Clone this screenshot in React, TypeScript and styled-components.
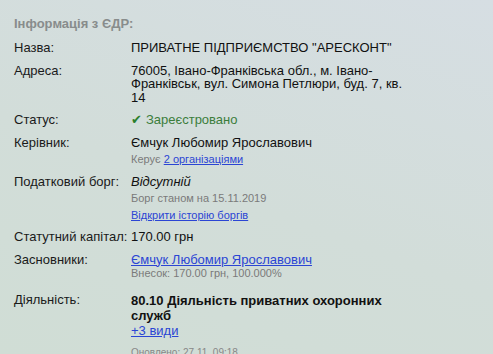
import styled, { createGlobalStyle } from 'styled-components';

const GlobalStyle = createGlobalStyle`
  html, body {
    margin: 0;
    padding: 0;
  }
  body {
    font-family: 'Liberation Sans', Arial, sans-serif;
    background: #d3dedb;
  }
`;

const Page = styled.div`
  width: 493px;
  height: 354px;
  overflow: hidden;
  background: linear-gradient(20deg, #d0ddd5 0%, #d2ddd9 45%, #d6dee3 100%);
  padding: 16px 0 0 14px;
  box-sizing: border-box;
  color: #111;
`;

const Heading = styled.div`
  font-size: 13px;
  font-weight: bold;
  line-height: 16px;
  color: #888c8c;
  margin-bottom: 4px;
`;

const Row = styled.div<{ $gapTop?: number }>`
  display: grid;
  grid-template-columns: 117px 273px;
  padding: 4.5px 0;
  margin-top: ${(p) => p.$gapTop ?? 0}px;
  font-size: 13px;
  line-height: 14px;
`;

const Label = styled.div`
  color: #1a1a1a;
`;

const Value = styled.div<{ $italic?: boolean; $lh?: number }>`
  font-style: ${(p) => (p.$italic ? 'italic' : 'normal')};
  line-height: ${(p) => p.$lh ?? 14}px;
`;

const Status = styled.span`
  color: #3b7d3b;
  &::before {
    content: '✔';
    color: #2a7f2a;
    margin-right: 4px;
    font-size: 13px;
  }
`;

const Sub = styled.div<{ $mt?: number; $lh?: number }>`
  font-size: 11px;
  line-height: ${(p) => p.$lh ?? 13}px;
  color: #7a7a7a;
  font-style: normal;
  font-weight: normal;
  margin-top: ${(p) => p.$mt ?? 3}px;
`;

const A = styled.a`
  color: #2b45d4;
  text-decoration: underline;
  cursor: pointer;
`;

const Updated = styled.div`
  margin: 5px 0 0 117px;
  font-size: 10px;
  line-height: 12px;
  color: #888;
`;

export default function App() {
  return (
    <>
      <GlobalStyle />
      <Page>
        <Heading>Інформація з ЄДР:</Heading>
        <Row>
          <Label>Назва:</Label>
          <Value>ПРИВАТНЕ ПІДПРИЄМСТВО "АРЕСКОНТ"</Value>
        </Row>
        <Row>
          <Label>Адреса:</Label>
          <Value $lh={13.5}>
            76005, Івано-Франківська обл., м. Івано-Франківськ, вул. Симона Петлюри, буд. 7, кв. 14
          </Value>
        </Row>
        <Row>
          <Label>Статус:</Label>
          <Value>
            <Status>Зареєстровано</Status>
          </Value>
        </Row>
        <Row>
          <Label>Керівник:</Label>
          <Value>
            Ємчук Любомир Ярославович
            <Sub $mt={2.5}>
              Керує <A>2 організаціями</A>
            </Sub>
          </Value>
        </Row>
        <Row>
          <Label>Податковий борг:</Label>
          <Value $italic>
            Відсутній
            <Sub $mt={3.5}>Борг станом на 15.11.2019</Sub>
            <Sub $mt={4.5} $lh={11}>
              <A>Відкрити історію боргів</A>
            </Sub>
          </Value>
        </Row>
        <Row>
          <Label>Статутний капітал:</Label>
          <Value>170.00 грн</Value>
        </Row>
        <Row>
          <Label>Засновники:</Label>
          <Value>
            <A>Ємчук Любомир Ярославович</A>
            <Sub $mt={0}>Внесок: 170.00 грн, 100.000%</Sub>
          </Value>
        </Row>
        <Row $gapTop={4}>
          <Label>Діяльність:</Label>
          <Value $lh={15}>
            <b>80.10 Діяльність приватних охоронних служб</b>
            <br />
            <A>+3 види</A>
          </Value>
        </Row>
        <Updated>Оновлено: 27.11, 09:18</Updated>
      </Page>
    </>
  );
}
